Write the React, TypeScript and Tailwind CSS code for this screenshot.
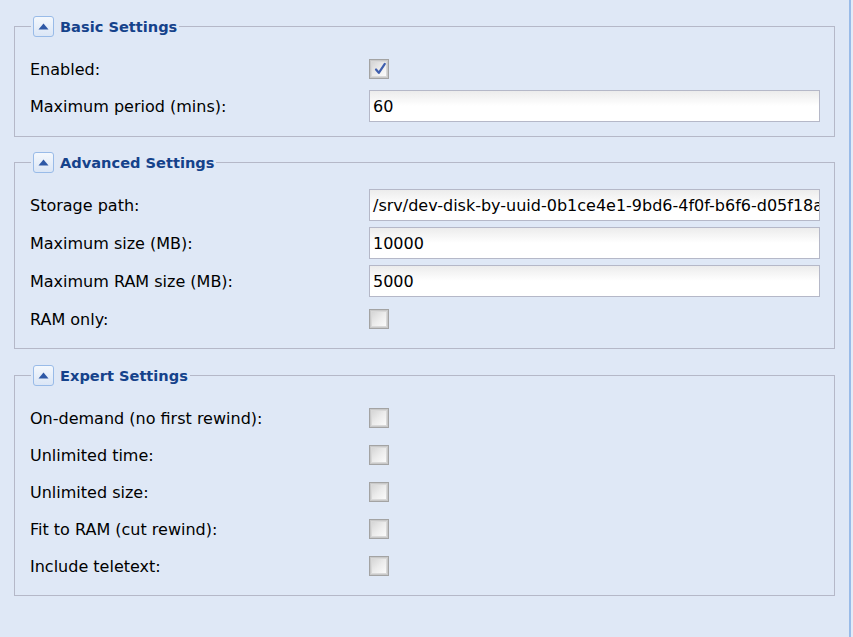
import React from "react";

const FONT = { fontFamily: '"DejaVu Sans", "Liberation Sans", sans-serif' };

function Toggle() {
  return (
    <span className="flex h-[21px] w-[21px] shrink-0 items-center justify-center rounded-[3px] border border-[#99bbe8] bg-gradient-to-b from-[#f4f8fd] to-[#dbe6f6]">
      <svg width="11" height="7" viewBox="0 0 11 7">
        <polygon points="5.5,0.5 10.5,6.5 0.5,6.5" fill="#2e58a6" />
      </svg>
    </span>
  );
}

function Check({ checked }: { checked?: boolean }) {
  return (
    <div className="h-[20px] w-[20px] shrink-0 border border-[#a3a3a3] bg-[#c9c9c9] p-[1px]">
      <div className="relative h-full w-full border border-[#d9d9d9] bg-gradient-to-br from-[#d6d6d6] via-[#ececec] to-[#fbfbfb]">
        {checked && (
          <svg className="absolute left-[1px] top-[0px]" width="14" height="14" viewBox="0 0 14 14">
            <path d="M3 7.5 L5.8 10.8 L11.8 1.8" stroke="#3f5fae" strokeWidth="2.2" fill="none" strokeLinecap="round" strokeLinejoin="round" />
          </svg>
        )}
      </div>
    </div>
  );
}

function TextRow({ label, value }: { label: string; value: string }) {
  return (
    <div className="flex h-[32px] items-center">
      <div className="w-[339px] shrink-0 whitespace-nowrap pt-[2px] text-[16px] text-black">{label}</div>
      <div className="flex h-[32px] min-w-0 flex-1 items-center overflow-hidden border border-[#b5b8c8] bg-gradient-to-b from-[#ececec] via-white to-white px-[3px] pt-[2px] text-[16px] whitespace-nowrap text-black">
        {value}
      </div>
    </div>
  );
}

function CheckRow({ label, checked }: { label: string; checked?: boolean }) {
  return (
    <div className="flex h-[31px] items-center">
      <div className="w-[339px] shrink-0 whitespace-nowrap pt-[2px] text-[16px] text-black">{label}</div>
      <Check checked={checked} />
    </div>
  );
}

function Fieldset({ title, children, className }: { title: string; children: React.ReactNode; className?: string }) {
  return (
    <fieldset className={"min-w-0 border border-[#b5b8c8] pl-[15px] pr-[14px] pb-[14px] " + (className ?? "")}>
      <legend className="ml-[1px] flex h-[22px] items-center gap-[6px] px-[2px]">
        <Toggle />
        <span className="whitespace-nowrap pt-[1px] text-[14.6px] font-bold text-[#15428b]">{title}</span>
      </legend>
      <div className="flex flex-col gap-[6px] pt-[16px]">{children}</div>
    </fieldset>
  );
}

export default function App() {
  return (
    <div className="flex h-[637px] w-[853px] overflow-hidden bg-[#dfe8f6]" style={FONT}>
      <div className="w-[849px] min-w-0 shrink-0 pl-[14px] pr-[14px] pt-[15px]">
        <Fieldset title="Basic Settings">
          <CheckRow label="Enabled:" checked />
          <TextRow label="Maximum period (mins):" value="60" />
        </Fieldset>
        <Fieldset title="Advanced Settings" className="mt-[14px]">
          <TextRow label="Storage path:" value="/srv/dev-disk-by-uuid-0b1ce4e1-9bd6-4f0f-b6f6-d05f18a" />
          <TextRow label="Maximum size (MB):" value="10000" />
          <TextRow label="Maximum RAM size (MB):" value="5000" />
          <CheckRow label="RAM only:" />
        </Fieldset>
        <Fieldset title="Expert Settings" className="mt-[15px]">
          <CheckRow label="On-demand (no first rewind):" />
          <CheckRow label="Unlimited time:" />
          <CheckRow label="Unlimited size:" />
          <CheckRow label="Fit to RAM (cut rewind):" />
          <CheckRow label="Include teletext:" />
        </Fieldset>
      </div>
      <div className="w-[2px] shrink-0 bg-[#99bbe8]" />
      <div className="flex-1 bg-[#e3ebf7]" />
    </div>
  );
}
